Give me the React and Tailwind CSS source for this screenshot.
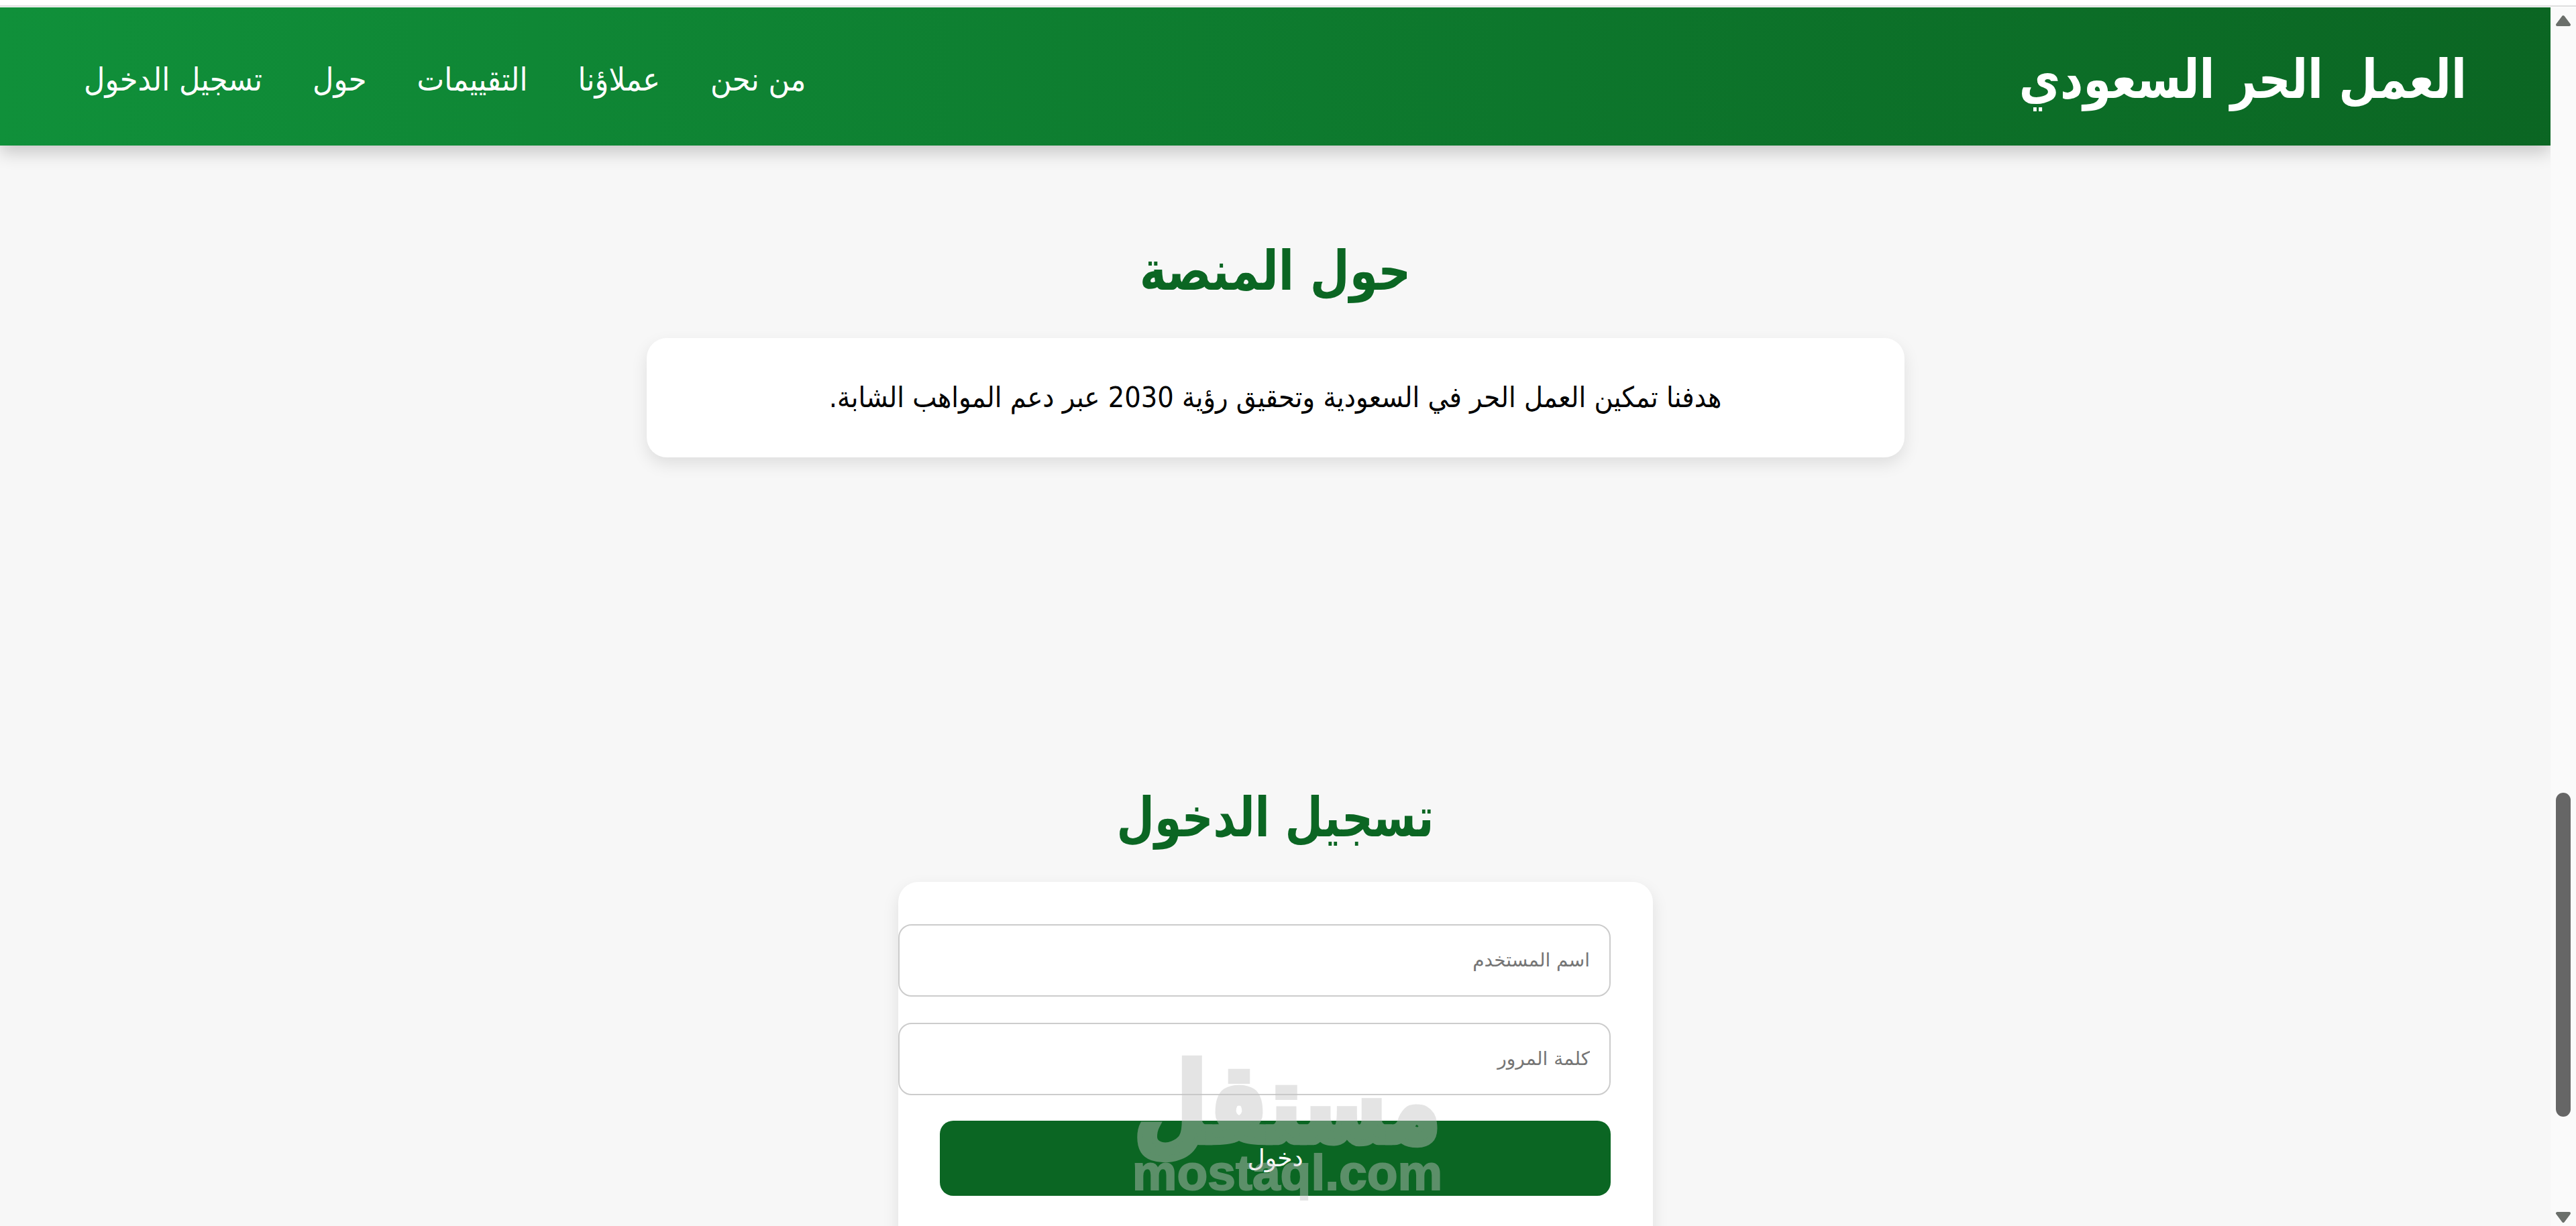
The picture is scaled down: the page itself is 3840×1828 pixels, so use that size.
import React from "react";

const arabic = "font-['DejaVu_Sans',sans-serif]";
const navItems = ["من نحن", "عملاؤنا", "التقييمات", "حول", "تسجيل الدخول"];

const Arrow = ({ down }) => (
  <svg width="24" height="18" viewBox="0 0 24 18" className={down ? "rotate-180" : ""}>
    <path d="M12 3 L21 15 H3 Z" fill="#6b6f6b" stroke="#6b6f6b" strokeWidth="4" strokeLinejoin="round" />
  </svg>
);

const App = () => {
  return (
    <div className={`h-[1828px] overflow-hidden bg-white flex flex-col ${arabic}`}>
      <div className="h-[11px] shrink-0 pt-[8px]">
        <div className="h-[2px] bg-[#dedede]" />
      </div>

      <div className="flex-1 flex min-h-0">
        <div dir="rtl" className="flex-1 relative overflow-hidden bg-[#f7f7f7] min-w-0">
          {/* Header */}
          <header className="h-[206px] px-[125px] flex justify-between items-center bg-gradient-to-l from-[#0b6623] to-[#10903a] text-white shadow-[0_10px_25px_rgba(0,0,0,0.2)]">
            <h1 className="pt-[8px] text-[67px] font-bold scale-y-[1.2]">العمل الحر السعودي</h1>
            <nav className="pt-[8px] flex gap-[75px] text-[43.2px] scale-y-[1.1]">
              {navItems.map((item) => (
                <a key={item}>{item}</a>
              ))}
            </nav>
          </header>

          {/* About */}
          <section className="pt-[137px] flex flex-col items-center">
            <h2 className="text-[68px] font-bold text-[#0b6623] leading-[100px] scale-y-[1.2]">حول المنصة</h2>
            <div className="mt-[50px] w-[1875px] h-[178px] rounded-[30px] bg-white shadow-[0_10px_25px_rgba(0,0,0,0.1)] flex items-center justify-center text-black">
              <p className="text-[38.5px] scale-y-[1.1]">
                هدفنا تمكين العمل الحر في السعودية وتحقيق رؤية 2030 عبر دعم المواهب الشابة.
              </p>
            </div>
          </section>

          {/* Login */}
          <section className="pt-[487px] flex flex-col items-center">
            <h2 className="text-[65px] font-bold text-[#0b6623] leading-[100px] scale-y-[1.25]">تسجيل الدخول</h2>
            <form className="mt-[46px] w-[1125px] h-[600px] rounded-[30px] bg-white p-[62.5px] shadow-[0_10px_25px_rgba(0,0,0,0.1)]">
              <input
                placeholder="اسم المستخدم"
                className="box-content block w-full h-[104px] px-[29px] border-2 border-[#ccc] rounded-[20px] text-[28px] placeholder:text-[#757575]"
              />
              <input
                placeholder="كلمة المرور"
                className="box-content block mt-[39px] w-full h-[104px] px-[29px] border-2 border-[#ccc] rounded-[20px] text-[28px] placeholder:text-[#757575]"
              />
              <button
                type="button"
                className="block mt-[38px] w-full h-[112px] rounded-[20px] bg-[#0b6623] text-white text-[36px]"
              >
                دخول
              </button>
            </form>
          </section>

          {/* Watermark */}
          <div dir="ltr" className="absolute left-[1689px] top-[1560px] w-[460px] flex flex-col items-center text-[#c3c3c3] opacity-[0.44] font-bold pointer-events-none">
            <span className="text-[125px] leading-[150px] scale-y-[1.3] [-webkit-text-stroke:8px_#c3c3c3]">مستقل</span>
            <span className="mt-[2px] text-[75px] leading-[50px] font-['Liberation_Sans',sans-serif] [-webkit-text-stroke:2px_#c3c3c3]">mostaql.com</span>
          </div>
        </div>

        {/* Scrollbar */}
        <div className="w-[38px] shrink-0 bg-[#fafafa] relative z-10">
          <div className="absolute left-[7px] top-[11px]"><Arrow /></div>
          <div className="absolute left-[8px] top-[1171px] w-[22px] h-[483px] rounded-[11px] bg-[#666]" />
          <div className="absolute left-[7px] top-[1795px]"><Arrow down /></div>
        </div>
      </div>
    </div>
  );
};

export default App;
